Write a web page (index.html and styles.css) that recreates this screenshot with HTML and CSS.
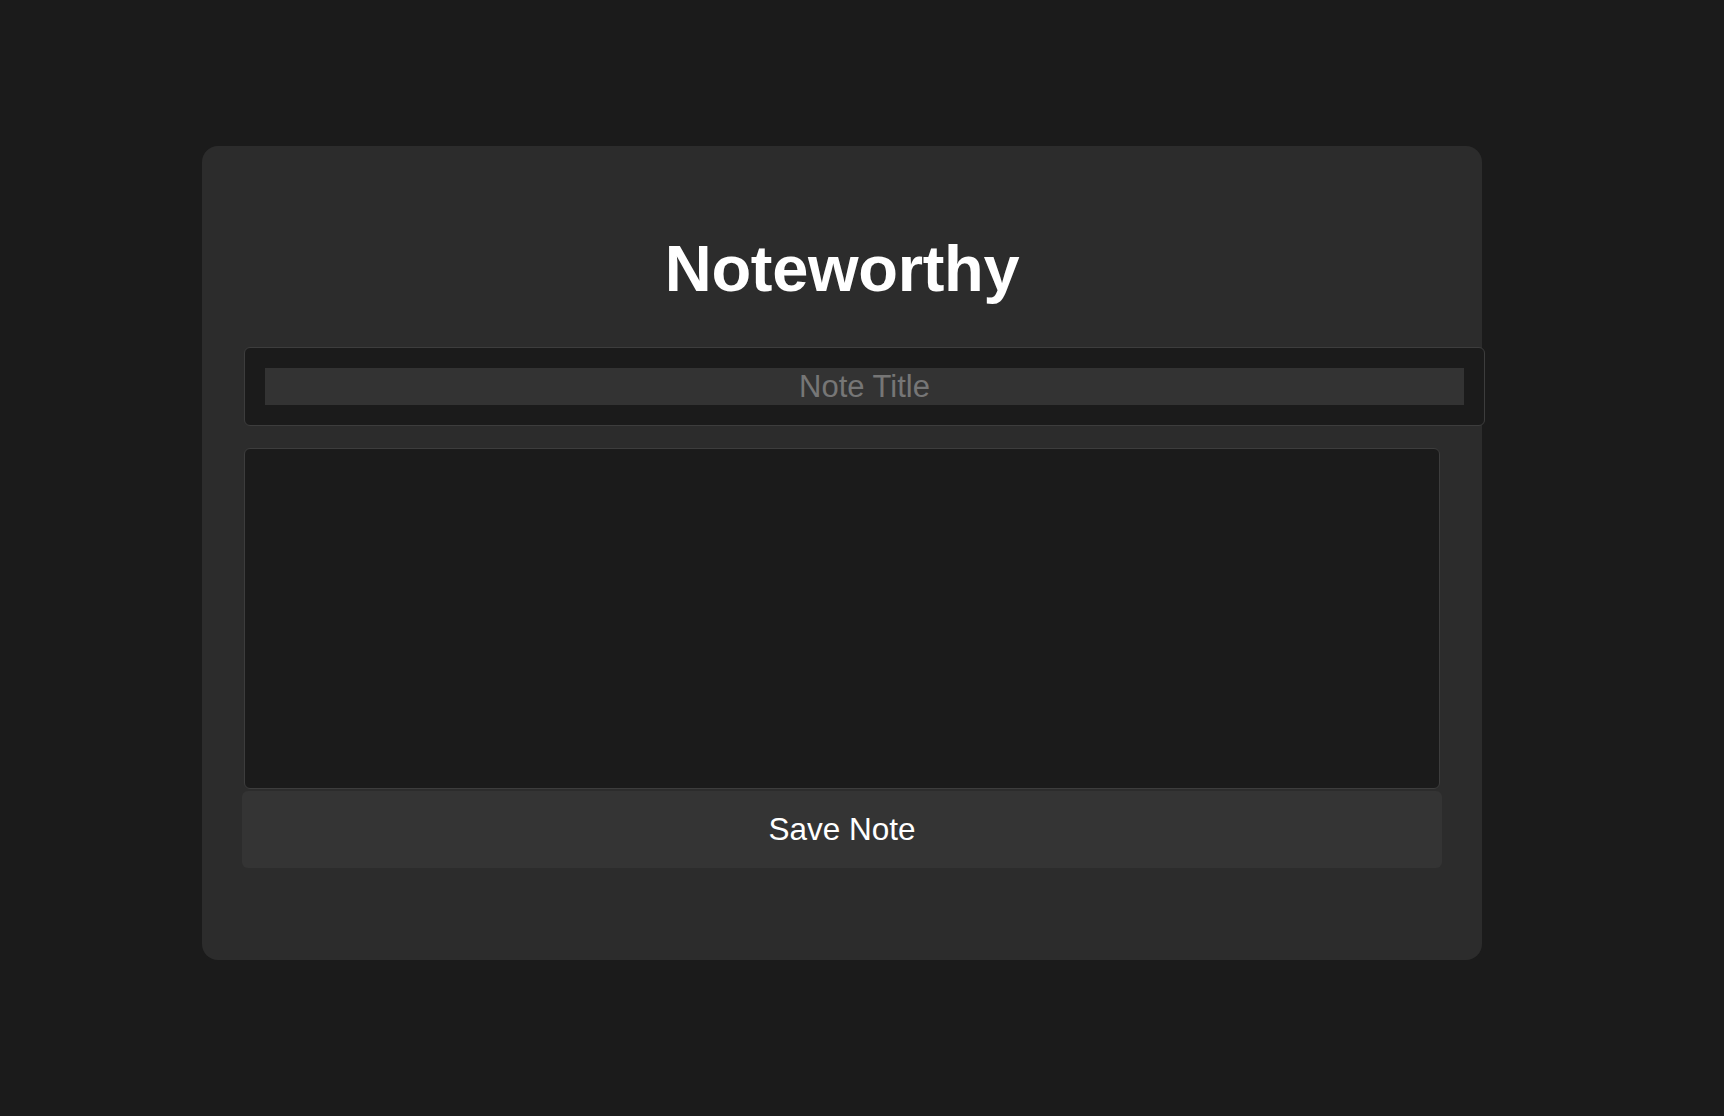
FILE: index.html
```html
<!DOCTYPE html>
<html lang="en">
<head>
<meta charset="utf-8">
<title>Noteworthy</title>
<link rel="stylesheet" href="styles.css">
</head>
<body>
<main class="page">
  <section class="card">
    <h1 class="title">Noteworthy</h1>
    <div class="title-field">
      <input class="title-input" type="text" placeholder="Note Title">
    </div>
    <textarea class="note-body"></textarea>
    <button class="save-btn" type="button">Save Note</button>
  </section>
</main>
</body>
</html>
```

FILE: styles.css
```css
html, body {
  margin: 0;
  padding: 0;
  background: #1b1b1b;
  font-family: "Liberation Sans", Arial, Helvetica, sans-serif;
}

.page {
  min-height: 1116px;
  box-sizing: border-box;
  padding: 146px 0 0 202px;
  display: flex;
  align-items: flex-start;
}

.card {
  width: 1280px;
  box-sizing: border-box;
  background: #2c2c2c;
  border-radius: 16px;
  padding: 86px 40px 92px;
  display: flex;
  flex-direction: column;
  align-items: flex-start;
}

.title {
  align-self: stretch;
  margin: 0 0 41px;
  font-size: 65px;
  line-height: 74px;
  font-weight: 700;
  letter-spacing: -0.3px;
  color: #ffffff;
  text-align: center;
}

.title-field {
  margin: 0 0 22px 2px;
  width: 1241px;
  box-sizing: border-box;
  padding: 20px;
  background: #1b1b1b;
  border: 1px solid #3d3d3d;
  border-radius: 6px;
  display: flex;
}

.title-input {
  width: 1200px;
  height: 37px;
  box-sizing: border-box;
  border: none;
  outline: none;
  padding: 0;
  background: #333333;
  color: #ffffff;
  font-family: "Liberation Sans", Arial, sans-serif;
  font-size: 31px;
  text-align: center;
}

.title-input::placeholder {
  color: #767676;
}

.note-body {
  display: block;
  margin: 0 0 2px 2px;
  width: 1196px;
  height: 341px;
  box-sizing: border-box;
  background: #1b1b1b;
  border: 1px solid #3d3d3d;
  border-radius: 6px;
  resize: none;
  outline: none;
  color: #ffffff;
  font-family: "Liberation Sans", Arial, sans-serif;
  font-size: 20px;
  padding: 10px;
}

.save-btn {
  width: 1200px;
  height: 77px;
  border: none;
  border-radius: 6px;
  background: #343434;
  color: #ffffff;
  font-family: "Liberation Sans", Arial, sans-serif;
  font-size: 31.5px;
  cursor: pointer;
}
```
